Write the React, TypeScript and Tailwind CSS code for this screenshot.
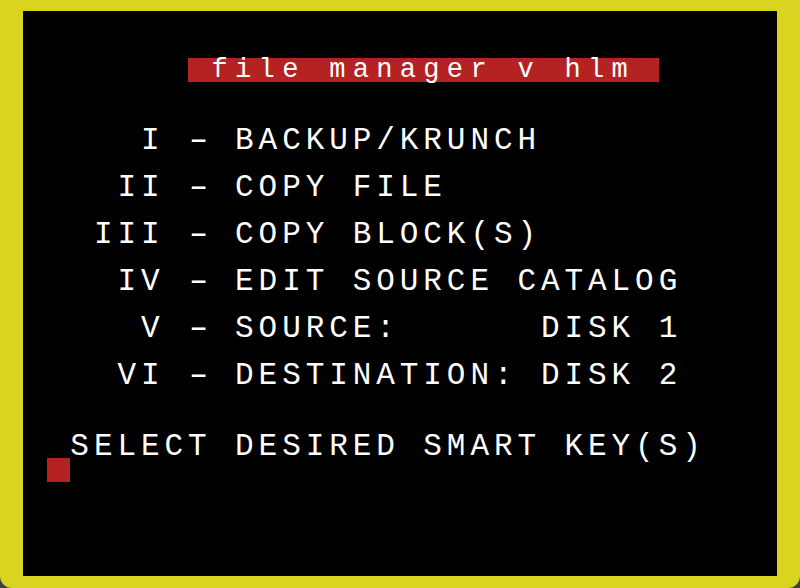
const COLS = 32;

// text screen, 32 x 24 cells; each entry is a row index -> row text
const rows: Record<number, string> = {
  5: "     I - BACKUP/KRUNCH",
  7: "    II - COPY FILE",
  9: "   III - COPY BLOCK(S)",
  11: "    IV - EDIT SOURCE CATALOG",
  13: "     V - SOURCE:      DISK 1",
  15: "    VI - DESTINATION: DISK 2",
  18: "  SELECT DESIRED SMART KEY(S)",
};

const title = " file manager v hlm ";
const titleCol = 7;

function Cell({ ch, red }: { ch: string; red?: boolean }) {
  return (
    <span
      className={
        "block h-[23.54px] w-[23.54px] shrink-0 pr-[9px] text-center whitespace-pre " +
        (red ? "bg-[#b42222] " : "") +
        (ch === "-" ? "origin-[7.27px_50%] scale-x-[1.6]" : "")
      }
    >
      {ch}
    </span>
  );
}

function TextRow({ text }: { text: string }) {
  const chars = text.padEnd(COLS, " ").split("");
  return (
    <div className="flex h-[23.54px] text-[31px] leading-[24.5px]">
      {chars.map((c, i) => (
        <Cell key={i} ch={c} />
      ))}
    </div>
  );
}

function TitleRow() {
  const chars = (" ".repeat(titleCol) + title).padEnd(COLS, " ").split("");
  return (
    <div className="flex h-[23.54px] text-[27px] leading-[25px]">
      {chars.map((c, i) => (
        <Cell key={i} ch={c} red={i >= titleCol && i < titleCol + title.length} />
      ))}
    </div>
  );
}

function CursorRow() {
  return (
    <div className="flex h-[23.54px]">
      <Cell ch=" " />
      <Cell ch=" " red />
    </div>
  );
}

export default function App() {
  return (
    <div className="h-[588px] w-[800px] bg-[#3b3f46]">
      <div className="h-full w-full rounded-b-[12px] bg-[#d9d41f] pl-[23.3px] pt-[11.3px]">
        <div
          className="flex h-[564.8px] w-[753.4px] flex-col overflow-hidden bg-black text-white"
          style={{ fontFamily: '"Liberation Mono", "DejaVu Sans Mono", monospace' }}
        >
          {Array.from({ length: 24 }).map((_, r) => {
            if (r === 2) return <TitleRow key={r} />;
            if (r === 19) return <CursorRow key={r} />;
            return <TextRow key={r} text={rows[r] ?? ""} />;
          })}
        </div>
      </div>
    </div>
  );
}
